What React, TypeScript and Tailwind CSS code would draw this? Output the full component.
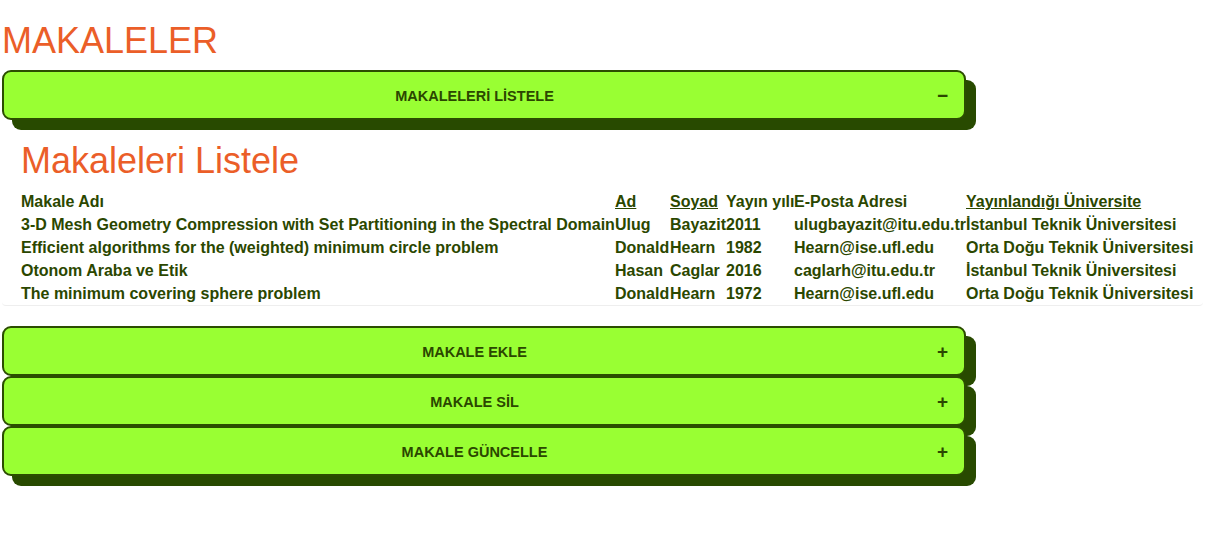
import React from 'react'

const rows = [
  {
    title: '3-D Mesh Geometry Compression with Set Partitioning in the Spectral Domain',
    ad: 'Ulug',
    soyad: 'Bayazit',
    yil: '2011',
    mail: 'ulugbayazit@itu.edu.tr',
    uni: 'İstanbul Teknik Üniversitesi',
  },
  {
    title: 'Efficient algorithms for the (weighted) minimum circle problem',
    ad: 'Donald',
    soyad: 'Hearn',
    yil: '1982',
    mail: 'Hearn@ise.ufl.edu',
    uni: 'Orta Doğu Teknik Üniversitesi',
  },
  {
    title: 'Otonom Araba ve Etik',
    ad: 'Hasan',
    soyad: 'Caglar',
    yil: '2016',
    mail: 'caglarh@itu.edu.tr',
    uni: 'İstanbul Teknik Üniversitesi',
  },
  {
    title: 'The minimum covering sphere problem',
    ad: 'Donald',
    soyad: 'Hearn',
    yil: '1972',
    mail: 'Hearn@ise.ufl.edu',
    uni: 'Orta Doğu Teknik Üniversitesi',
  },
]

const Collapsible = ({ label, open }: { label: string; open?: boolean }) => {
  return (
    <div className="flex items-center w-[964px] h-[50px] pl-[18px] pr-[16px] bg-[#99ff33] border-2 border-[#2b4d00] rounded-[9px] shadow-[10px_10px_0_0_#284a00] cursor-pointer">
      <span className="flex-1 pt-[4px] text-center text-[14.5px] font-bold uppercase text-[#2b4700]">{label}</span>
      <span className="w-[21px] text-right text-[19px] font-bold leading-none text-[#2b4700]">
        {open ? '−' : '+'}
      </span>
    </div>
  )
}

export default function App() {
  return (
    <div
      className="min-h-[546px] bg-white px-[2px]"
      style={{ fontFamily: '"Liberation Sans", Arial, sans-serif' }}
    >
      <h1 className="mt-[20px] mb-[9px] text-[36px] leading-[41px] font-normal text-[#eb5e28]">MAKALELER</h1>

      <Collapsible label="Makalelerİ Lİstele" open />

      <div className="pt-[20px] px-[19px] border-b border-[#eeeeee] rounded-b-[4px]">
        <h2 className="mb-[9px] text-[36px] leading-[41px] font-normal text-[#eb5e28]">Makaleleri Listele</h2>
        <table className="table-fixed w-[1172px] border-collapse whitespace-nowrap text-[16px] font-bold leading-[23px] text-[#2b4700]">
          <colgroup>
            <col className="w-[594px]" />
            <col className="w-[55px]" />
            <col className="w-[56px]" />
            <col className="w-[68px]" />
            <col className="w-[172px]" />
            <col />
          </colgroup>
          <thead>
            <tr className="text-left">
              <th className="p-0 font-bold">Makale Adı</th>
              <th className="p-0 font-bold"><a className="underline">Ad</a></th>
              <th className="p-0 font-bold"><a className="underline">Soyad</a></th>
              <th className="p-0 font-bold">Yayın yılı</th>
              <th className="p-0 font-bold">E-Posta Adresi</th>
              <th className="p-0 font-bold"><a className="underline">Yayınlandığı Üniversite</a></th>
            </tr>
          </thead>
          <tbody>
            {rows.map((r, i) => (
              <tr key={i}>
                <td className="p-0">{r.title}</td>
                <td className="p-0">{r.ad}</td>
                <td className="p-0">{r.soyad}</td>
                <td className="p-0">{r.yil}</td>
                <td className="p-0">{r.mail}</td>
                <td className="p-0">{r.uni}</td>
              </tr>
            ))}
          </tbody>
        </table>
      </div>

      <div className="mt-[20px] flex flex-col">
        <Collapsible label="Makale Ekle" />
        <Collapsible label="Makale Sİl" />
        <Collapsible label="Makale Güncelle" />
      </div>
    </div>
  )
}
